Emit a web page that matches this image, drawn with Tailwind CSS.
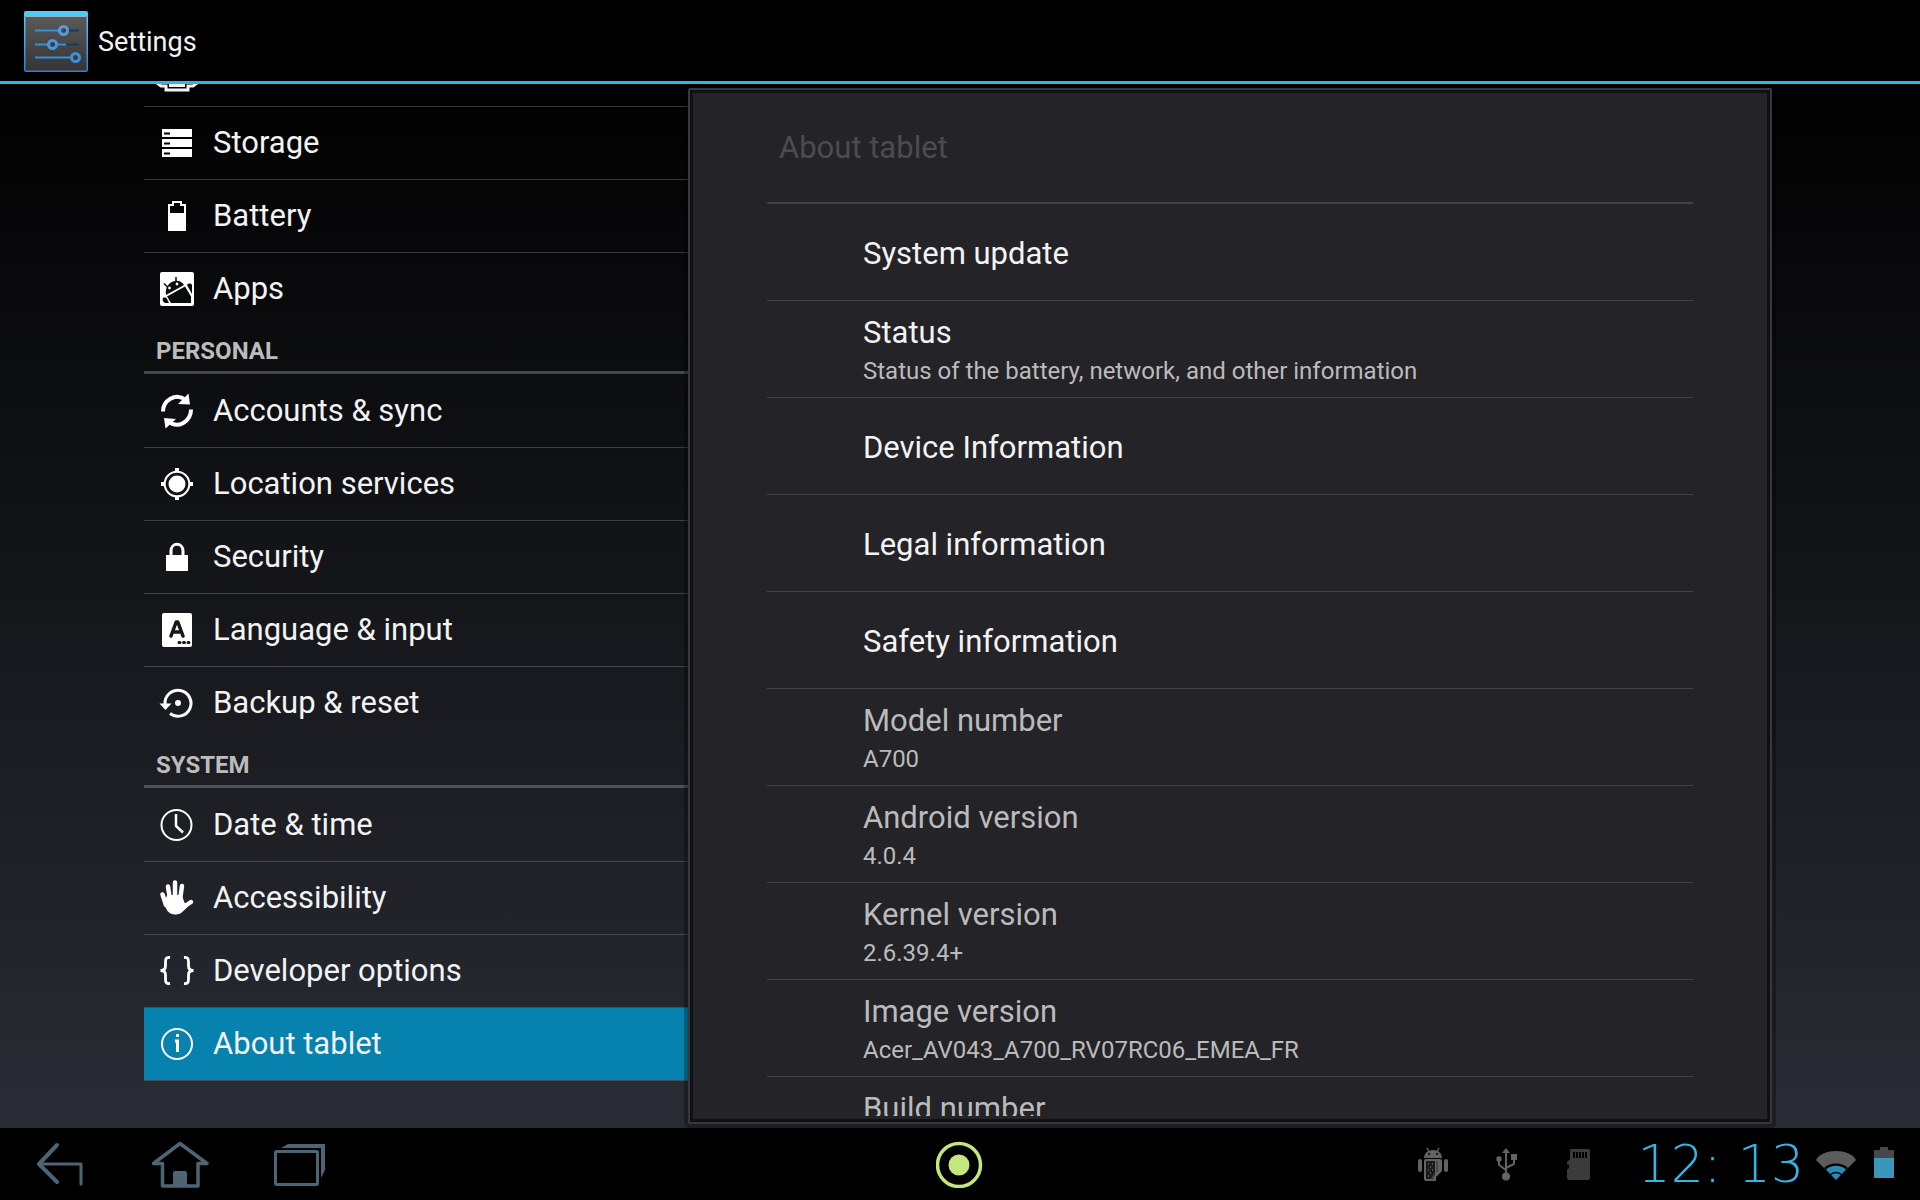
<!DOCTYPE html>
<html lang="en">
<head>
    <meta charset="UTF-8">
    <meta name="viewport" content="width=device-width, initial-scale=1.0">
    <title>Settings</title>
    <script src="https://cdn.jsdelivr.net/npm/@tailwindcss/browser@4"></script>
</head>
<body class="h-screen flex flex-col overflow-hidden bg-black text-[#f3f3f3] font-['Roboto',sans-serif]">
    <!-- Action bar -->
    <header class="flex h-[84px] shrink-0 items-center gap-2.5 border-b-3 border-[#33b5e5] pt-0.5 pl-6">
        <svg class="h-16 w-16" viewBox="0 0 64 64" fill="none">
            <defs>
                <linearGradient id="tile" x1="0" y1="0" x2="0" y2="1"><stop offset="0" stop-color="#5a5a5a"/><stop offset="1" stop-color="#353535"/></linearGradient>
                <linearGradient id="rim" x1="0" y1="0" x2="0" y2="1"><stop offset="0" stop-color="#4fd0ff"/><stop offset="1" stop-color="#2a7fe0"/></linearGradient>
            </defs>
            <rect x="0" y="1" width="64" height="61" rx="2" fill="url(#rim)"/>
            <rect x="1.500" y="6" width="61" height="54.500" fill="url(#tile)"/>
            <path d="M2 6.500h60" stroke="#8fb4c4"/>
            <path d="M39 20.500h16M28 34.500h27" stroke="#1d3a58" stroke-width="2"/>
            <path d="M11 20.500h24M11 34.500h13M32 34.500h10M11 47.500h36" stroke="#3a8fdc" stroke-width="2"/>
            <circle cx="39.500" cy="20.500" r="4" stroke="#5a9bd5" stroke-width="3"/>
            <circle cx="28.500" cy="34.500" r="4" stroke="#4a97dd" stroke-width="3"/>
            <circle cx="51.500" cy="47.500" r="4" stroke="#3a8fe0" stroke-width="3"/>
        </svg>
        <h1 class="pt-0.5 text-[27px]">Settings</h1>
    </header>

    <main class="flex min-h-0 flex-1 overflow-hidden bg-linear-to-b/srgb from-[#010101] to-[#292c34] px-[7.5%]">
        <!-- Categories, scrolled to the end -->
        <nav class="-mt-[50px] w-1/3 shrink-0 text-[31px]">
            <ul class="divide-y divide-[#808488]/40">
                <li>
                    <a href="#" aria-label="HDMI" class="flex h-[72px] items-center gap-[18px] pl-[15px]">
                        <svg class="h-9 w-9 overflow-visible" viewBox="0 0 36 36" fill="none" stroke="#f3f3f3" stroke-width="3">
                            <path d="M-2 22v9l4 3h5v4h22v-4h5l4-3v-9z"/>
                            <path d="M10 33.500h16" stroke-width="3"/>
                        </svg>
                    </a>
                </li>
                <li>
                    <a href="#" class="flex h-[72px] items-center gap-[18px] pl-[15px]">
                        <svg class="h-9 w-9" viewBox="0 0 36 36" fill="#fff">
                            <path d="M3 4h30v8H3zM3 14h30v8H3zM3 24h30v8H3z"/>
                            <path d="M5 8.500h6M5 18.500h6M5 28.500h6" stroke="#000" stroke-width="2"/>
                        </svg>
                        Storage
                    </a>
                </li>
                <li>
                    <a href="#" class="flex h-[72px] items-center gap-[18px] pl-[15px]">
                        <svg class="h-9 w-9" viewBox="0 0 36 36">
                            <path d="M10 32V7h4V4h8v3h4v25z" fill="none" stroke="#fff" stroke-width="2"/>
                            <path d="M10 15h16v17H10z" fill="#fff"/>
                        </svg>
                        Battery
                    </a>
                </li>
                <li>
                    <a href="#" class="flex h-[72px] items-center gap-[18px] pl-[15px]">
                        <svg class="h-9 w-9" viewBox="0 0 36 36" fill="#0a0b0c">
                            <rect x="1" y="1" width="34" height="34" rx="2" fill="#fff"/>
                            <path d="M7 24C6 16 10 11 16 10c4-1 7 1 9 4z"/>
                            <path d="M8.500 16L5 12.500M17 11l0-5" stroke="#0a0b0c" stroke-width="1.500"/>
                            <circle cx="10.500" cy="17" r="1.400" fill="#fff"/>
                            <circle cx="18" cy="13" r="1.400" fill="#fff"/>
                            <path d="M8 25.500L26 15.500l6 10V32H12z"/>
                            <path d="M28 14c1-2 4-2 5 0v9z"/>
                            <path d="M4 27c2-1 4 0 4 1l2 4H6c-2-1-3-3-2-5z"/>
                        </svg>
                        Apps
                    </a>
                </li>
            </ul>

            <h2 class="mb-px flex h-[49px] items-center border-b-3 border-[#808488]/50 pt-1.5 pl-3 text-2xl font-bold text-[#bcbcbc]">PERSONAL</h2>
            <ul class="divide-y divide-[#808488]/40">
                <li>
                    <a href="#" class="flex h-[72px] items-center gap-[18px] pl-[15px]">
                        <svg class="h-9 w-9" viewBox="0 0 36 36" fill="none" stroke="#fff" stroke-width="4">
                            <path d="M4 18.500C4 8 16 -1 27 7"/>
                            <path d="M32 16.500C32 28 19 37 9 28"/>
                            <path d="M29.500 0.500L31 11.500 19 11z" fill="#fff" stroke="none"/>
                            <path d="M6.500 35.500L5 25 17 26z" fill="#fff" stroke="none"/>
                        </svg>
                        Accounts &amp; sync
                    </a>
                </li>
                <li>
                    <a href="#" class="flex h-[72px] items-center gap-[18px] pl-[15px]">
                        <svg class="h-9 w-9" viewBox="0 0 36 36" fill="none" stroke="#fff">
                            <circle cx="18" cy="18" r="8.500" fill="#fff" stroke="none"/>
                            <circle cx="18" cy="18" r="12.300" stroke-width="2"/>
                            <path d="M18 2v4M18 30v4M2 18h4M30 18h4" stroke-width="4"/>
                        </svg>
                        Location services
                    </a>
                </li>
                <li>
                    <a href="#" class="flex h-[72px] items-center gap-[18px] pl-[15px]">
                        <svg class="h-9 w-9" viewBox="0 0 36 36">
                            <path d="M12 17v-5c0-9 12-9 12 0v5" fill="none" stroke="#fff" stroke-width="3"/>
                            <path d="M7 16h22v16H7z" fill="#fff"/>
                        </svg>
                        Security
                    </a>
                </li>
                <li>
                    <a href="#" class="flex h-[72px] items-center gap-[18px] pl-[15px]">
                        <svg class="h-9 w-9" viewBox="0 0 36 36" fill="none" stroke="#15171a">
                            <rect x="3" y="1" width="30" height="34" rx="2" fill="#fff" stroke="none"/>
                            <path d="M12 24l5.200-14h1.600L24 24M14 20h8" stroke-width="3.500" stroke-linecap="round" stroke-linejoin="round"/>
                            <path d="M20 30.500h1M24.500 30.500h1M29 30.500h1" stroke-width="3" stroke-linecap="round"/>
                        </svg>
                        Language &amp; input
                    </a>
                </li>
                <li>
                    <a href="#" class="flex h-[72px] items-center gap-[18px] pl-[15px]">
                        <svg class="h-9 w-9" viewBox="0 0 36 36" fill="none">
                            <path d="M6 19A13 13 0 1 1 11 28.500" stroke="#fff" stroke-width="3"/>
                            <path d="M0.500 18.500h12L6.500 25z" fill="#fff"/>
                            <circle cx="19" cy="18" r="3" fill="#fff"/>
                        </svg>
                        Backup &amp; reset
                    </a>
                </li>
            </ul>

            <h2 class="mb-px flex h-[49px] items-center border-b-3 border-[#808488]/50 pt-1.5 pl-3 text-2xl font-bold text-[#bcbcbc]">SYSTEM</h2>
            <ul class="divide-y divide-[#808488]/40 border-b border-[#808488]/40">
                <li>
                    <a href="#" class="flex h-[72px] items-center gap-[18px] pl-[15px]">
                        <svg class="h-9 w-9" viewBox="0 0 36 36" fill="none" stroke="#fff">
                            <circle cx="17.500" cy="18" r="15" stroke-width="2"/>
                            <path d="M17 7v12l7 6.500" stroke-width="2.500"/>
                        </svg>
                        Date &amp; time
                    </a>
                </li>
                <li>
                    <a href="#" class="flex h-[72px] items-center gap-[18px] pl-[15px]">
                        <svg class="h-9 w-9" viewBox="0 0 36 36" fill="none" stroke="#fff" stroke-width="4.500" stroke-linecap="round" stroke-linejoin="round">
                            <path d="M3.500 14.500L7 25M9 6.500L11 20M16 2.500V20M23 6L21 20M32 22L26 26"/>
                            <path d="M6 22l3-6h13l3 8h3l4-2-8 8c-4 5-13 5-16-2z" fill="#fff" stroke-width="2"/>
                        </svg>
                        Accessibility
                    </a>
                </li>
                <li>
                    <a href="#" class="flex h-[72px] items-center gap-[18px] pl-[15px]">
                        <svg class="h-9 w-9" viewBox="0 0 36 36" fill="none" stroke="#fff" stroke-width="2.800">
                            <path d="M11 4.500C7 4 6.500 6 6.500 9v4c0 3-1.500 4.500-5 4.500 3.500 0 5 1.500 5 4.500v4c0 3 .5 5 4.500 4.500"/>
                            <path d="M25 4.500c4-.5 4.500 1.500 4.500 4.500v4c0 3 1.500 4.500 5 4.500-3.500 0-5 1.500-5 4.500v4c0 3-.5 5-4.500 4.500"/>
                        </svg>
                        Developer options
                    </a>
                </li>
                <li>
                    <a href="#" aria-current="page" class="flex h-[72px] items-center gap-[18px] bg-[#0781ae] pl-[15px]">
                        <svg class="h-9 w-9" viewBox="0 0 36 36" fill="none" stroke="#fff">
                            <circle cx="18" cy="18" r="15" stroke-width="2"/>
                            <path d="M16 15h2.500v11" stroke-width="3"/>
                            <path d="M17 9.500h3" stroke-width="3"/>
                        </svg>
                        About tablet
                    </a>
                </li>
            </ul>
        </nav>

        <!-- Details -->
        <section class="my-1 mr-1 flex flex-1 flex-col rounded-xs border-2 border-[#36383c] bg-[#101114] p-[3px] ring-4 ring-black/30">
            <div class="min-h-0 flex-1 overflow-hidden bg-[#242327] px-[74px]">
                <h2 class="flex h-[111px] items-center border-b-2 border-[#434345] pt-0.5 pl-3 text-[31px] text-[#4c4c4d]">About tablet</h2>
                <ul class="divide-y divide-[#434345]">
                    <li class="flex h-[97px] flex-col justify-center pt-[3px] pl-24">
                        <a href="#" class="text-[31px] leading-10">System update</a>
                    </li>
                    <li class="flex h-[97px] flex-col justify-center pt-[3px] pl-24">
                        <a href="#" class="text-[31px] leading-10">Status</a>
                        <p class="text-2xl leading-9 text-[#bbb]">Status of the battery, network, and other information</p>
                    </li>
                    <li class="flex h-[97px] flex-col justify-center pt-[3px] pl-24">
                        <a href="#" class="text-[31px] leading-10">Device Information</a>
                    </li>
                    <li class="flex h-[97px] flex-col justify-center pt-[3px] pl-24">
                        <a href="#" class="text-[31px] leading-10">Legal information</a>
                    </li>
                    <li class="flex h-[97px] flex-col justify-center pt-[3px] pl-24">
                        <a href="#" class="text-[31px] leading-10">Safety information</a>
                    </li>
                    <li class="flex h-[97px] flex-col justify-center pt-[3px] pl-24 text-[#bbb]">
                        <h3 class="text-[31px] leading-10">Model number</h3>
                        <p class="text-2xl leading-9">A700</p>
                    </li>
                    <li class="flex h-[97px] flex-col justify-center pt-[3px] pl-24 text-[#bbb]">
                        <h3 class="text-[31px] leading-10">Android version</h3>
                        <p class="text-2xl leading-9">4.0.4</p>
                    </li>
                    <li class="flex h-[97px] flex-col justify-center pt-[3px] pl-24 text-[#bbb]">
                        <h3 class="text-[31px] leading-10">Kernel version</h3>
                        <p class="text-2xl leading-9">2.6.39.4+</p>
                    </li>
                    <li class="flex h-[97px] flex-col justify-center pt-[3px] pl-24 text-[#bbb]">
                        <h3 class="text-[31px] leading-10">Image version</h3>
                        <p class="text-2xl leading-9">Acer_AV043_A700_RV07RC06_EMEA_FR</p>
                    </li>
                    <li class="h-[39px] overflow-hidden pt-3 pl-24 text-[#bbb]">
                        <h3 class="text-[31px] leading-10">Build number</h3>
                    </li>
                </ul>
            </div>
        </section>
    </main>

    <!-- System bar -->
    <footer class="grid h-[72px] shrink-0 grid-cols-3 items-center bg-black">
        <div class="flex items-center gap-[60px] pb-1.5 pl-[30px] text-[#4f6472]">
            <button aria-label="Back">
                <svg class="h-[60px] w-[60px]" viewBox="0 0 60 60" fill="none" stroke="currentColor" stroke-linecap="round" stroke-linejoin="round">
                    <path d="M27 14L9 33l18 18" stroke-width="4"/>
                    <path d="M9 33h42v20" stroke-width="3"/>
                </svg>
            </button>
            <button aria-label="Home">
                <svg class="h-[60px] w-[60px]" viewBox="0 0 60 60" fill="none" stroke="currentColor" stroke-linejoin="round">
                    <path d="M30 12.500L3.500 32.500h9V55H48V32.500h9z" stroke-width="3.500"/>
                    <path d="M23 55V42q0-2 2-2h10q2 0 2 2v13z" fill="currentColor" stroke="none"/>
                </svg>
            </button>
            <button aria-label="Recent apps">
                <svg class="h-[60px] w-[60px]" viewBox="0 0 60 60" fill="none">
                    <rect x="5.500" y="20.500" width="42" height="33" rx="1" stroke="currentColor" stroke-width="3"/>
                    <path d="M11 17l7-4h37v26l-4 8V17z" fill="currentColor"/>
                </svg>
            </button>
        </div>
        <button aria-label="Ring" class="justify-self-center">
            <svg class="h-12 w-12" viewBox="0 0 48 48" fill="none">
                <circle cx="23" cy="25" r="21.500" stroke="#c3e67d" stroke-width="3.500"/>
                <circle cx="23" cy="25" r="10.500" fill="#c3e67d"/>
            </svg>
        </button>
        <div class="flex items-center justify-end pr-6">
            <svg class="mr-12 h-9 w-[30px]" viewBox="0 0 30 36" fill="#636363">
                <path d="M6 12c0-5 4-8 9-8s9 3 9 8z"/>
                <path d="M10.500 5L9 2M19.500 5L21 2" stroke="#636363" stroke-width="1.500"/>
                <circle cx="11" cy="8" r="1" fill="#000"/>
                <circle cx="19" cy="8" r="1" fill="#000"/>
                <rect x="0" y="13" width="4" height="13" rx="2"/>
                <rect x="26" y="13" width="4" height="13" rx="2"/>
                <path d="M6 15q0-2 2-2h14q2 0 2 2v10l-6 6v4H8q-2 0-2-2z"/>
                <path d="M8 15h9v12l-4 6H8z" fill="#1b1b1b"/>
                <path d="M10 18h1M14 18h1M12 21h1M10 24h1M14 24h1M12 27h1M10 30h1" stroke="#888"/>
                <path d="M19 15v11M17 28l-3 6" stroke="#333"/>
            </svg>
            <svg class="mr-12 h-9 w-[22px]" viewBox="0 0 22 36" fill="none" stroke="#636363" stroke-width="2">
                <path d="M10 6v24M3 14v5l7 5M18 12v6l-8 4"/>
                <path d="M10 2l4 5H6zM15 8h6v6h-6z" fill="#636363" stroke="none"/>
                <circle cx="3" cy="13" r="2.700" fill="#636363" stroke="none"/>
                <circle cx="10" cy="30.500" r="4" fill="#636363" stroke="none"/>
            </svg>
            <svg class="mr-12 h-9 w-6" viewBox="0 0 24 36">
                <path d="M4 3h18q2 0 2 2v27q0 2-2 2H3q-2 0-2-2v-8l2-2v-3l-2-1v-2l3-3z" fill="#3b3b3b"/>
                <path d="M8 6v6M11 6v6M14 6v6M17 6v6M20 6v6" stroke="#000" stroke-width="2"/>
            </svg>
            <time class="mr-3 font-['DejaVu_Sans'] text-[52px] leading-none font-extralight whitespace-nowrap text-[#33b5e5]">12: 13</time>
            <svg class="mr-4 h-9 w-10" viewBox="0 0 40 36">
                <path d="M20 34L0 14C6 2 34 2 40 14z" fill="#5c5c5c"/>
                <path d="M20 34L8 22c5-6 19-6 24 0z" fill="#000"/>
                <path d="M20 34L10 23.500c5-5 15-5 20 0z" fill="#2b8ab5"/>
                <path d="M14.500 28.500q5.500-4 11 0" fill="none" stroke="#000" stroke-width="1.500"/>
            </svg>
            <svg class="h-9 w-6" viewBox="0 0 24 36">
                <path d="M2 4h6V1h8v3h6v9H2z" fill="#484848"/>
                <path d="M2 12h20v20H2z" fill="#3a96bb"/>
            </svg>
        </div>
    </footer>
</body>
</html>
